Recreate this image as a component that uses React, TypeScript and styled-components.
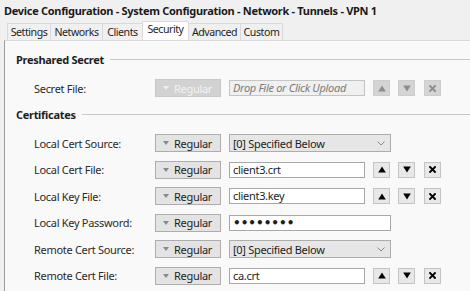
import React from "react";
import styled, { createGlobalStyle } from "styled-components";

const Global = createGlobalStyle`
  html, body { margin: 0; padding: 0; background: #f0f0f0; }
  body { font-family: "Noto Sans", "Open Sans", sans-serif; font-size: 11px; letter-spacing: -0.3px; color: #1e1e1e; }
  * { box-sizing: border-box; }
`;

const Window = styled.div`
  width: 470px;
  height: 291px;
  overflow: hidden;
  display: flex;
  flex-direction: column;
  background: #f0f0f0;
`;

const Title = styled.div`
  height: 21px;
  padding: 2px 0 0 4px;
  font-weight: 700;
  font-size: 11px;
  line-height: 17px;
  white-space: nowrap;
  color: #1a1a1a;
`;

const TabBar = styled.div`
  display: flex;
  align-items: flex-end;
  height: 19px;
  padding-left: 8px;
`;

const Tab = styled.div<{ $active?: boolean; $w: number }>`
  width: ${(p) => p.$w}px;
  height: ${(p) => (p.$active ? 19 : 17)}px;
  border: 1px solid #d9d9d9;
  border-bottom: none;
  margin-left: -1px;
  background: ${(p) => (p.$active ? "#ffffff" : "#f0f0f0")};
  line-height: ${(p) => (p.$active ? 15 : 16)}px;
  font-size: 10.6px;
  letter-spacing: -0.45px;
  text-align: center;
  white-space: nowrap;
  color: #1e1e1e;
  position: relative;
  z-index: ${(p) => (p.$active ? 1 : 0)};
`;

const Panel = styled.div`
  flex: 1;
  margin-left: 4px;
  border-left: 1px solid #9c9c9c;
  border-top: 1px solid #d9d9d9;
  background: #f9f9f9;
  padding: 10px 0 0 11px;
  display: flex;
  flex-direction: column;
`;

const SectionHead = styled.div`
  display: flex;
  align-items: center;
  height: 17px;
  font-weight: 700;
  gap: 6px;
  &::after {
    content: "";
    flex: 1;
    height: 1px;
    background: #c9c9c9;
  }
`;

const Rows = styled.div<{ $top: number; $bottom: number }>`
  display: flex;
  flex-direction: column;
  gap: 8.6px;
  padding: ${(p) => p.$top}px 0 ${(p) => p.$bottom}px 0;
`;

const Row = styled.div`
  display: flex;
  align-items: center;
  height: 18px;
`;

const Label = styled.div`
  width: 139px;
  padding-left: 18px;
  white-space: nowrap;
  color: #2a2a2a;
`;

const ModeButton = styled.div<{ $disabled?: boolean }>`
  width: 66px;
  height: 18px;
  display: flex;
  align-items: center;
  gap: 5px;
  padding-left: 7px;
  border: 1px solid ${(p) => (p.$disabled ? "#c8c8c8" : "#adadad")};
  background: ${(p) => (p.$disabled ? "#d2d2d2" : "#e3e3e3")};
  color: ${(p) => (p.$disabled ? "#f2f2f2" : "#1e1e1e")};
  margin-right: 8px;
`;

const Caret = styled.span<{ $disabled?: boolean }>`
  width: 0;
  height: 0;
  border-left: 3.5px solid transparent;
  border-right: 3.5px solid transparent;
  border-top: 4px solid ${(p) => (p.$disabled ? "#eeeeee" : "#8a8a8a")};
`;

const TextBox = styled.div<{ $w: number; $disabled?: boolean; $italic?: boolean }>`
  width: ${(p) => p.$w}px;
  height: 16px;
  border: 1px solid ${(p) => (p.$disabled ? "#c4c4c4" : "#a8a8a8")};
  background: ${(p) => (p.$disabled ? "#f0f0f0" : "#ffffff")};
  color: ${(p) => (p.$disabled ? "#7a7a7a" : "#1e1e1e")};
  font-style: ${(p) => (p.$italic ? "italic" : "normal")};
  padding-left: 3px;
  line-height: 14px;
  white-space: nowrap;
  overflow: hidden;
`;

const Dots = styled.span`
  font-size: 12px;
  letter-spacing: 0px;
  font-family: "DejaVu Sans", sans-serif;
  font-weight: 700;
`;

const SelectBox = styled.div`
  width: 162px;
  height: 18px;
  border: 1px solid #adadad;
  background: #e6e6e6;
  display: flex;
  align-items: center;
  justify-content: space-between;
  padding: 0 5px 0 3px;
  color: #1e1e1e;
`;

const IconBtn = styled.div<{ $disabled?: boolean; $gap: number }>`
  width: 17px;
  height: 16px;
  border: 1px solid ${(p) => (p.$disabled ? "#cdcdcd" : "#c4c4c4")};
  background: ${(p) => (p.$disabled ? "#d4d4d4" : "#e8e8e8")};
  display: flex;
  align-items: center;
  justify-content: center;
  margin-left: ${(p) => p.$gap}px;
  color: ${(p) => (p.$disabled ? "#8c8c8c" : "#000000")};
`;

const UpIcon = () => (
  <svg width="8" height="7" viewBox="0 0 8 7">
    <path d="M4 0.5 L7.8 6.5 L0.2 6.5 Z" fill="currentColor" />
  </svg>
);
const DownIcon = () => (
  <svg width="8" height="7" viewBox="0 0 8 7">
    <path d="M0.2 0.5 L7.8 0.5 L4 6.5 Z" fill="currentColor" />
  </svg>
);
const XIcon = () => (
  <svg width="7" height="7" viewBox="0 0 7 7">
    <path d="M1 1 L6 6 M6 1 L1 6" stroke="currentColor" strokeWidth="1.9" strokeLinecap="square" />
  </svg>
);
const Chevron = () => (
  <svg width="8" height="5" viewBox="0 0 8 5">
    <path d="M0.5 0.5 L4 4 L7.5 0.5" stroke="#8a8a8a" strokeWidth="1" fill="none" />
  </svg>
);

const Mode = ({ disabled }: { disabled?: boolean }) => (
  <ModeButton $disabled={disabled}>
    <Caret $disabled={disabled} />
    Regular
  </ModeButton>
);

const Arrows = ({ disabled }: { disabled?: boolean }) => (
  <>
    <IconBtn $disabled={disabled} $gap={8}>
      <UpIcon />
    </IconBtn>
    <IconBtn $disabled={disabled} $gap={8}>
      <DownIcon />
    </IconBtn>
    <IconBtn $disabled={disabled} $gap={9}>
      <XIcon />
    </IconBtn>
  </>
);

const tabs: [string, number][] = [
  ["Settings", 44],
  ["Networks", 53],
  ["Clients", 41],
  ["Security", 47],
  ["Advanced", 53],
  ["Custom", 43],
];

export default function App() {
  return (
    <Window>
      <Global />
      <Title>Device Configuration - System Configuration - Network - Tunnels - VPN 1</Title>
      <TabBar>
        {tabs.map(([t, w]) => (
          <Tab key={t} $w={w} $active={t === "Security"}>
            {t}
          </Tab>
        ))}
      </TabBar>
      <Panel>
        <SectionHead>Preshared Secret</SectionHead>
        <Rows $top={11} $bottom={9}>
          <Row>
            <Label>Secret File:</Label>
            <Mode disabled />
            <TextBox $w={136} $disabled $italic>
              Drop File or Click Upload
            </TextBox>
            <Arrows disabled />
          </Row>
        </Rows>
        <SectionHead>Certificates</SectionHead>
        <Rows $top={11} $bottom={0}>
          <Row>
            <Label>Local Cert Source:</Label>
            <Mode />
            <SelectBox>
              [0] Specified Below
              <Chevron />
            </SelectBox>
          </Row>
          <Row>
            <Label>Local Cert File:</Label>
            <Mode />
            <TextBox $w={136}>client3.crt</TextBox>
            <Arrows />
          </Row>
          <Row>
            <Label>Local Key File:</Label>
            <Mode />
            <TextBox $w={136}>client3.key</TextBox>
            <Arrows />
          </Row>
          <Row>
            <Label>Local Key Password:</Label>
            <Mode />
            <TextBox $w={162}>
              <Dots>••••••••</Dots>
            </TextBox>
          </Row>
          <Row>
            <Label>Remote Cert Source:</Label>
            <Mode />
            <SelectBox>
              [0] Specified Below
              <Chevron />
            </SelectBox>
          </Row>
          <Row>
            <Label>Remote Cert File:</Label>
            <Mode />
            <TextBox $w={136}>ca.crt</TextBox>
            <Arrows />
          </Row>
        </Rows>
      </Panel>
    </Window>
  );
}
